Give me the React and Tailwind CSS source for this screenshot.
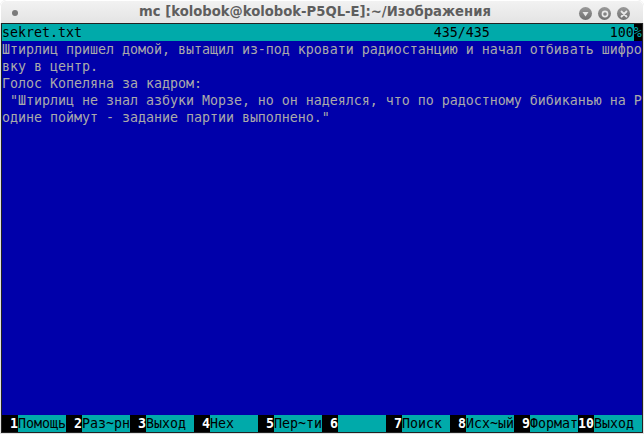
const lines = [
  'Штирлиц пришел домой, вытащил из-под кровати радиостанцию и начал отбивать шифро',
  'вку в центр.',
  'Голос Копеляна за кадром:',
  ' "Штирлиц не знал азбуки Морзе, но он надеялся, что по радостному бибиканью на Р',
  'одине поймут - задание партии выполнено."',
];

const keys = [
  ['1', 'Помощь'],
  ['2', 'Раз~рн'],
  ['3', 'Выход'],
  ['4', 'Hex'],
  ['5', 'Пер~ти'],
  ['6', ''],
  ['7', 'Поиск'],
  ['8', 'Исх~ый'],
  ['9', 'Формат'],
  ['10', 'Выход'],
];

const mono = { fontFamily: '"DejaVu Sans Mono", "Liberation Mono", monospace' };

const WinButton = ({ children }) => (
  <div className="w-[13px] h-[13px] rounded-full bg-gradient-to-b from-[#9a9a9a] to-[#707070] flex items-center justify-center">
    {children}
  </div>
);

const App = () => {
  const empty = 24 - 2 - lines.length;

  return (
    <div className="w-[644px] h-[434px] bg-[#e2e2e2] rounded-t-[6px] flex flex-col overflow-hidden">
      {/* title bar */}
      <div className="relative h-[23px] flex items-center justify-center pr-[14px] bg-gradient-to-b from-[#f2f2f2] to-[#e4e4e4] border-t border-l border-r border-white rounded-t-[6px]">
        <div className="absolute left-[11px] top-[9px] w-[6px] h-[6px] rounded-full bg-[#7a7a7a]" />
        <span
          className="text-[13.2px] font-bold text-[#5e5e5e] leading-none"
          style={{ fontFamily: '"DejaVu Sans", sans-serif' }}
        >
          mc [kolobok@kolobok-P5QL-E]:~/Изображения
        </span>
        <div className="absolute right-[13px] top-[6px] flex gap-[6px]">
          <WinButton>
            <svg width="7" height="6" viewBox="0 0 7 6">
              <path d="M0.5 1 L6.5 1 L3.5 5.5 Z" fill="#e8e8e8" />
            </svg>
          </WinButton>
          <WinButton>
            <svg width="8" height="8" viewBox="0 0 8 8">
              <circle cx="4" cy="4" r="2.6" fill="none" stroke="#e8e8e8" strokeWidth="1.6" />
            </svg>
          </WinButton>
          <WinButton>
            <svg width="8" height="8" viewBox="0 0 8 8">
              <path d="M1.5 1.5 L6.5 6.5 M6.5 1.5 L1.5 6.5" stroke="#e8e8e8" strokeWidth="1.8" strokeLinecap="round" />
            </svg>
          </WinButton>
        </div>
      </div>

      {/* terminal */}
      <div
        className="mx-[1px] mb-[1px] border border-[#222222] bg-[#0000aa] text-[#aaaaaa] text-[13.29px] leading-[17px] whitespace-pre"
        style={mono}
      >
        <div className="h-[17px] bg-[#00aaaa] text-black flex">
          <span>{'sekret.txt'.padEnd(54) + '435/435'.padEnd(22) + '100'}</span>
          <span className="bg-black text-[#00aaaa] w-[8px]">%</span>
        </div>
        {lines.map((l, i) => (
          <div key={i} className="h-[17px]">{l}</div>
        ))}
        {Array.from({ length: empty }).map((_, i) => (
          <div key={'e' + i} className="h-[17px]" />
        ))}
        <div className="h-[17px] flex">
          {keys.map(([n, label]) => (
            <div key={n} className="w-[64px] flex">
              <span className="w-[16px] bg-black text-white font-bold text-right">{n}</span>
              <span className="w-[48px] bg-[#00aaaa] text-black">{label}</span>
            </div>
          ))}
        </div>
      </div>
    </div>
  );
};

export default App;
